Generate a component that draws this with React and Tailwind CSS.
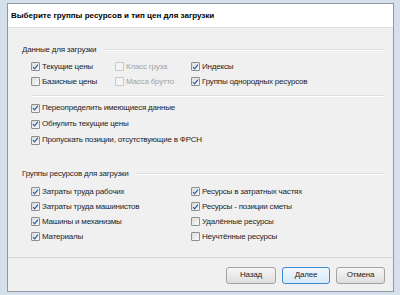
import React from 'react';

const font = { fontFamily: '"Liberation Sans", Arial, sans-serif' };

const Check = ({ checked, disabled }) => (
  <span
    className={`w-[9px] h-[9px] mr-[2px] shrink-0 flex items-center justify-center border rounded-[1px] ${
      disabled
        ? 'border-[#c8c8c8] bg-[#f4f4f4]'
        : 'border-[#8f8f8f] bg-gradient-to-br from-[#dcdcdc] to-[#fbfbfb]'
    }`}
  >
    {checked && (
      <svg width="8" height="8" viewBox="0 0 8 8">
        <path d="M1.2 4.2 L3.1 6.2 L6.8 1.3" fill="none" stroke="#2f5f9e" strokeWidth="1.4" />
      </svg>
    )}
  </span>
);

const Item = ({ label, checked, disabled, h = 'h-[15px]' }) => (
  <div className={`flex items-center ${h}`}>
    <Check checked={checked} disabled={disabled} />
    <span className={disabled ? 'text-[#a3a3a3]' : 'text-[#1e1e1e]'}>{label}</span>
  </div>
);

const Legend = ({ text, className }) => (
  <div className={`flex items-center h-[12px] ${className}`}>
    <span className="text-[#1e1e1e] mr-[8px]">{text}</span>
    <div className="flex-1 border-t border-[#dadfe4] border-b-white border-b" />
  </div>
);

const Btn = ({ label, primary, w }) => (
  <button
    className={`${w} h-[17px] rounded-[3px] border text-[8px] text-[#1e1e1e] bg-gradient-to-b ${
      primary
        ? 'border-[#3c8ad0] from-[#f2f8fd] to-[#d6e8f7]'
        : 'border-[#a3a3a3] from-[#f6f6f6] to-[#dedede]'
    }`}
  >
    {label}
  </button>
);

export default function App() {
  return (
    <div className="w-[400px] h-[295px] bg-[#d5e0eb] pl-[7px] pr-[6px] pt-[3px] overflow-hidden text-[8px] tracking-[-0.2px]" style={font}>
      <div className="h-[289px] flex flex-col border border-[#8d99a5] bg-[#f0f0f0]">
        <div className="h-[24px] shrink-0 bg-white border-b border-[#dfdfdf] flex items-center pl-[3px] pt-[1px]">
          <span className="font-bold text-[8px] tracking-normal text-black">Выберите группы ресурсов и тип цен для загрузки</span>
        </div>

        <div className="flex-1 pl-[14px] pr-[8px] pt-[16px]">
          <Legend text="Данные для загрузки" />
          <div className="pl-[9px] mt-[3px] grid grid-cols-[84px_76px_1fr]">
            <Item label="Текущие цены" checked />
            <Item label="Класс груза" disabled />
            <Item label="Индексы" checked />
            <Item label="Базисные цены" />
            <Item label="Масса брутто" disabled />
            <Item label="Группы однородных ресурсов" checked />
          </div>
          <div className="ml-[9px] mt-[6px] border-t border-[#dadfe4] border-b border-b-white" />
          <div className="pl-[9px] mt-[3px]">
            <Item label="Переопределить имеющиеся данные" checked h="h-[16px]" />
            <Item label="Обнулить текущие цены" checked h="h-[16px]" />
            <Item label="Пропускать позиции, отсутствующие в ФРСН" checked h="h-[16px]" />
          </div>

          <Legend text="Группы ресурсов для загрузки" className="mt-[20px]" />
          <div className="pl-[9px] mt-[4px] grid grid-cols-[160px_1fr]">
            <Item label="Затраты труда рабочих" checked />
            <Item label="Ресурсы в затратных частях" checked />
            <Item label="Затраты труда машинистов" checked />
            <Item label="Ресурсы - позиции сметы" checked />
            <Item label="Машины и механизмы" checked />
            <Item label="Удалённые ресурсы" />
            <Item label="Материалы" checked />
            <Item label="Неучтённые ресурсы" />
          </div>
        </div>

        <div className="h-[34px] shrink-0 border-t border-[#d6d6d6] flex items-center justify-end gap-[6px] pr-[8px] pt-[1px]">
          <Btn label="Назад" w="w-[50px]" />
          <Btn label="Далее" w="w-[48px]" primary />
          <Btn label="Отмена" w="w-[49px]" />
        </div>
      </div>
    </div>
  );
}
